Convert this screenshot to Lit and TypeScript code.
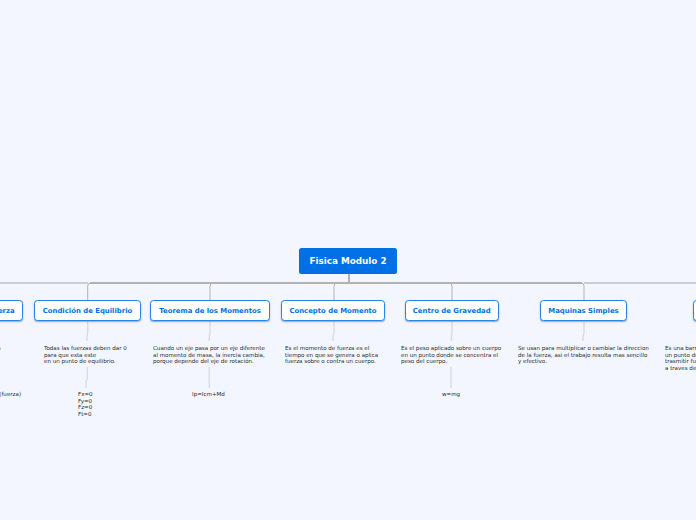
import { LitElement, html, css, svg } from "lit";
import { customElement } from "lit/decorators.js";

interface Box { label: string; x: number; w: number; }
interface Note { x: number; y: number; lines: string[]; }

const BOXES: Box[] = [
  { label: "Momento de Fuerza", x: -70, w: 92.5 },
  { label: "Condición de Equilibrio", x: 34, w: 107 },
  { label: "Teorema de los Momentos", x: 150, w: 120 },
  { label: "Concepto de Momento", x: 281, w: 104 },
  { label: "Centro de Gravedad", x: 404.5, w: 94.5 },
  { label: "Maquinas Simples", x: 540, w: 87 },
  { label: "Palanca", x: 693, w: 60 },
];

const NOTES: Note[] = [
  { x: -97, y: 345, lines: ["Es la capacidad de una fuerza para"] },
  { x: -29, y: 391, lines: ["M = F x d (fuerza)"] },
  { x: 44, y: 345, lines: ["Todas las fuerzas deben dar 0", "para que esta este", "en un punto de equilibrio."] },
  { x: 78, y: 391, lines: ["Fx=0", "Fy=0", "Fz=0", "Ft=0"] },
  { x: 153, y: 345, lines: ["Cuando un eje pasa por un eje diferente", "al momento de masa, la inercia cambia,", "porque depende del eje de rotación."] },
  { x: 192, y: 391, lines: ["Ip=Icm+Md"] },
  { x: 285, y: 345, lines: ["Es el momento de fuerza es el", "tiempo en que se genera o aplica", "fuerza sobre o contra un cuerpo."] },
  { x: 401, y: 345, lines: ["Es el peso aplicado sobre un cuerpo", "en un punto donde se concentra el", "peso del cuerpo."] },
  { x: 442, y: 391, lines: ["w=mg"] },
  { x: 518, y: 345, lines: ["Se usan para multiplicar o cambiar la direccion", "de la fuerza, asi el trabajo resulta mas sencillo", "y efectivo."] },
  { x: 665, y: 345, lines: ["Es una barra rigida con", "un punto de apoyo para", "trasmitir fuerza y movimiento", "a traves de ella."] },
];

const DARK = "#b2b2b4";
const LIGHT = "#cdced4";
const PALE = "#d8d9e0";

@customElement("app-root")
export class AppRoot extends LitElement {
  static styles = css`
    :host { display: block; width: 696px; height: 520px; overflow: hidden; background: #f3f6ff; font-family: "DejaVu Sans", Verdana, sans-serif; }
    .canvas { position: relative; width: 696px; height: 520px; overflow: hidden; }
    svg { position: absolute; left: 0; top: 0; }
    .root { position: absolute; left: 299px; top: 248px; width: 98px; height: 26px; box-sizing: border-box; display: flex; align-items: center; justify-content: center; background: #0070e6; color: #fff; font-weight: 700; font-size: 8.8px; border-radius: 2.5px; }
    .box { position: absolute; top: 300px; height: 21px; box-sizing: border-box; display: flex; align-items: center; justify-content: center; background: #fff; color: #0070e6; border: 1.5px solid #2585ea; border-radius: 3.5px; font-weight: 700; font-size: 6.9px; white-space: nowrap; box-shadow: 0 1px 1.5px rgba(50,70,110,.45); }
    .note { position: absolute; color: #2a2a2a; font-size: 5.55px; line-height: 6.6px; white-space: nowrap; }
  `;

  render() {
    const branchPath = (x: number, left: boolean) => `M${x} 300V286Q${x} 283 ${left ? x + 3 : x - 3} 283`;
    return html`<div class="canvas">
      <svg width="696" height="520" fill="none">
        ${svg`
          <path d="M0 283H88" stroke=${LIGHT} stroke-width="2"/>
          <path d="M584 283H696" stroke=${LIGHT} stroke-width="2"/>
          <path d="M90 283H582" stroke=${DARK} stroke-width="2"/>
          <path d="M349 274V283" stroke=${DARK} stroke-width="2"/>
          ${[87.7, 210, 334].map((x) => svg`<path d=${branchPath(x, true)} stroke=${DARK} stroke-width="1"/>`)}
          ${[452, 584].map((x) => svg`<path d=${branchPath(x, false)} stroke=${DARK} stroke-width="1"/>`)}
          ${[[87.7, 87], [210, 209.3], [334, 333], [452, 451.5], [584, 583]].map(([a, b]) => svg`<path d="M${a} 321V332Q${a} 335 ${b} 336V341" stroke=${PALE} stroke-width="1.3"/>`)}
          ${[[87.3, 86], [209.3, 209.3], [451, 451]].map(([a, b]) => svg`<path d="M${a} 367V377Q${a} 380 ${b} 381V388" stroke=${PALE} stroke-width="1.3"/>`)}
        `}
      </svg>
      <div class="root">Fisica Modulo 2</div>
      ${BOXES.map((b) => html`<div class="box" style="left:${b.x}px;width:${b.w}px">${b.label}</div>`)}
      ${NOTES.map((n) => html`<div class="note" style="left:${n.x}px;top:${n.y}px">${n.lines.map((l) => html`<div>${l}</div>`)}</div>`)}
    </div>`;
  }
}
